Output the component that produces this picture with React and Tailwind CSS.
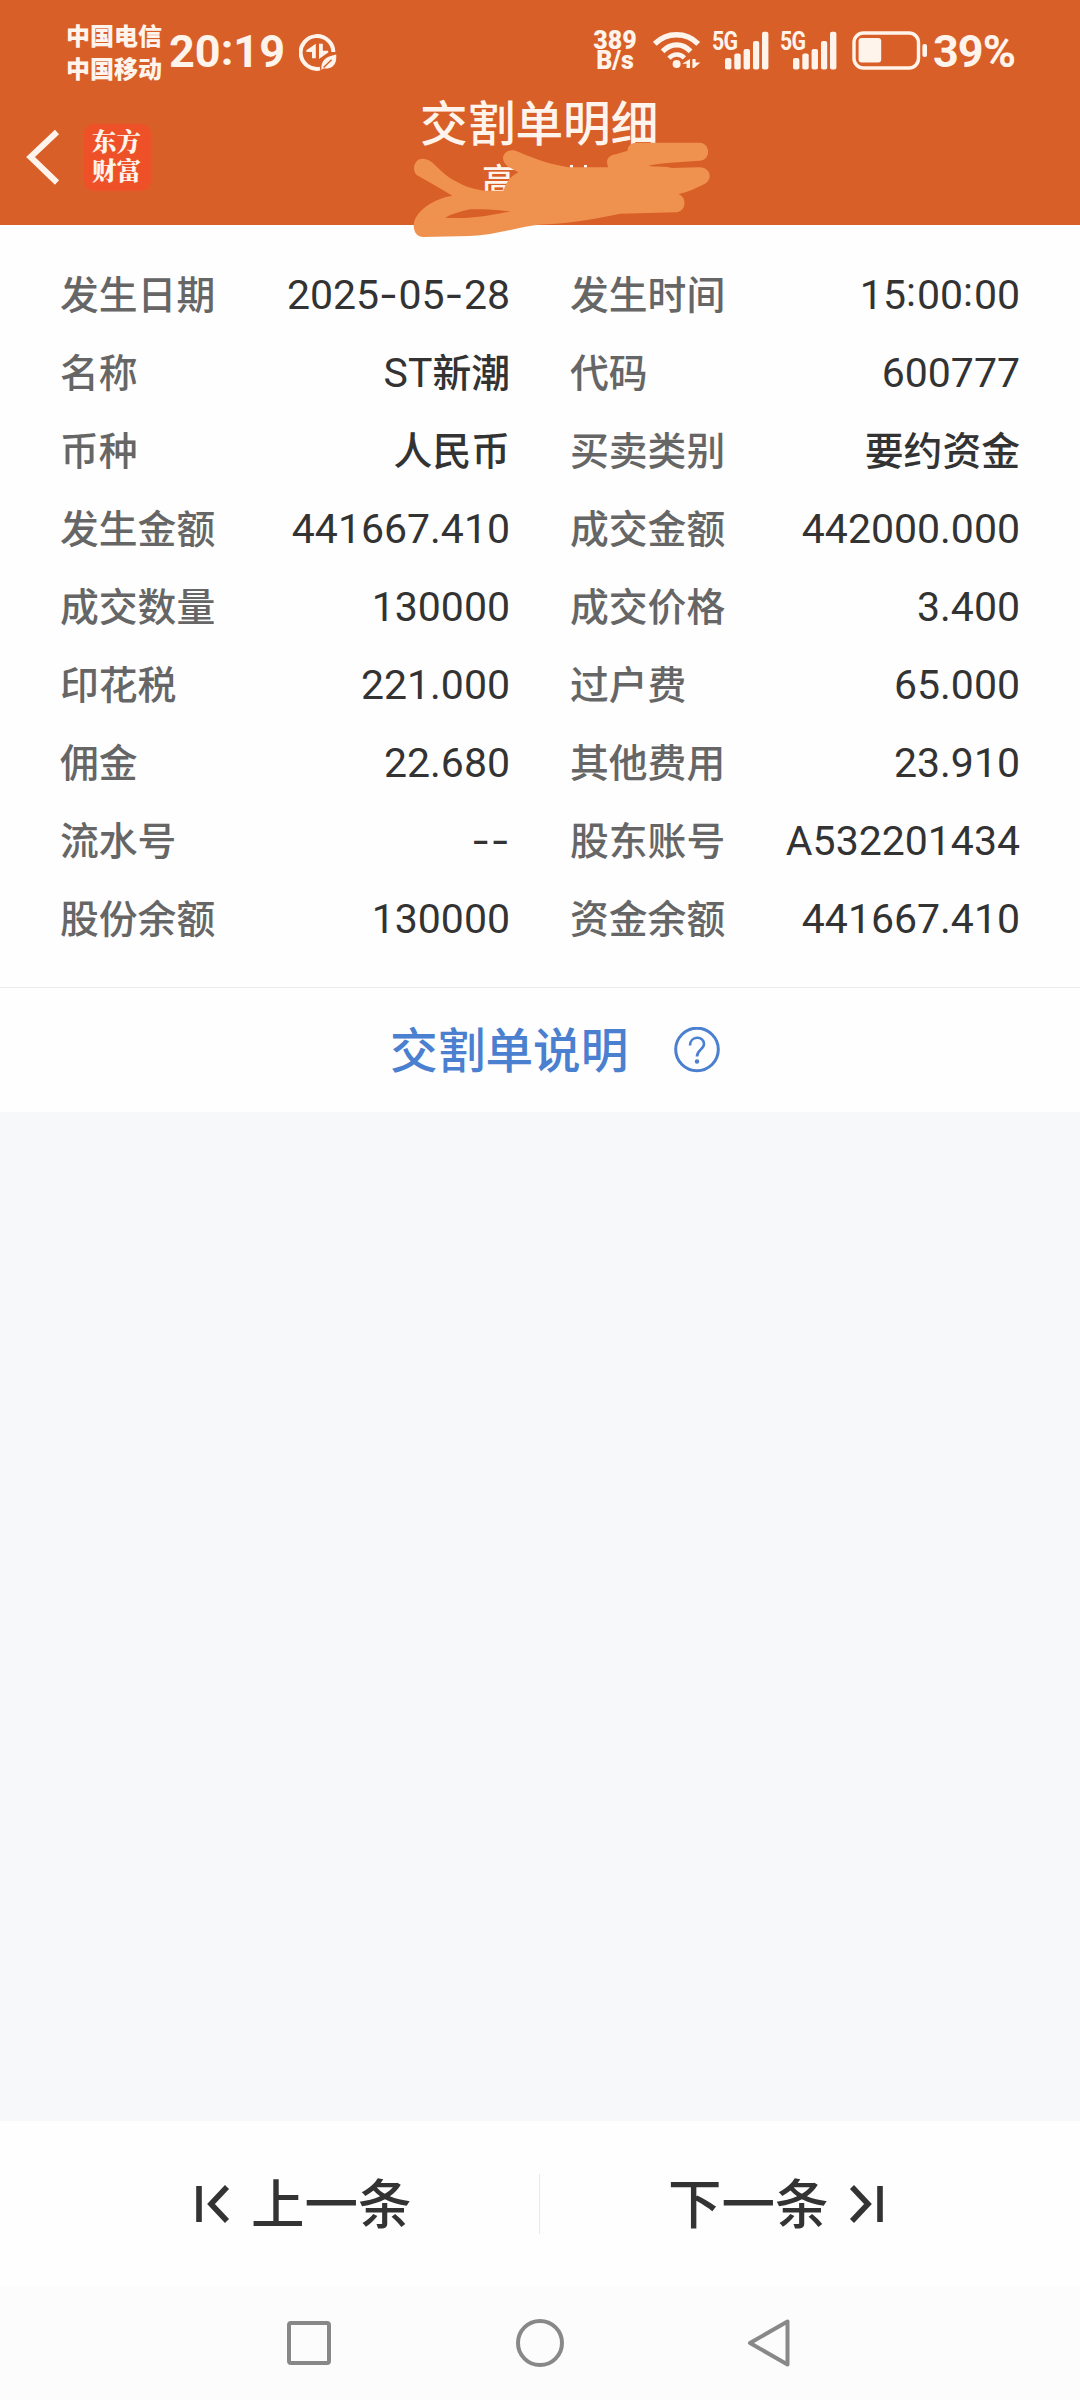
import React from 'react';

const rows = [
  ['发生日期', '2025-05-28', '发生时间', '15:00:00'],
  ['名称', 'ST新潮', '代码', '600777'],
  ['币种', '人民币', '买卖类别', '要约资金'],
  ['发生金额', '441667.410', '成交金额', '442000.000'],
  ['成交数量', '130000', '成交价格', '3.400'],
  ['印花税', '221.000', '过户费', '65.000'],
  ['佣金', '22.680', '其他费用', '23.910'],
  ['流水号', '--', '股东账号', 'A532201434'],
  ['股份余额', '130000', '资金余额', '441667.410'],
];

const EcoIcon = () => (
  <svg className="ml-[15px] mt-[33px] shrink-0" width="38" height="38" viewBox="0 0 38 38" fill="none">
    <path d="M34.4 19A16.4 16.4 0 1 0 21 35.6" stroke="#fff4ec" strokeWidth="4" />
    <path d="M16.8 10.8v14.400h-3.800v-6.200H7.400v-1.800zM20 10.800h3.800v7h5.400v1.600L20 26z" fill="#fff4ec" />
    <path d="M37.2 21.4c.8 8.8-2.4 14.6-12.6 14.2l-2.2 1.2c-.6-9.4 4-13.2 14.8-15.4z" fill="#fff4ec" />
    <path d="M24.6 34.4l8-7.6" stroke="#d85f27" strokeWidth="1.4" />
  </svg>
);

const WifiIcon = () => (
  <svg className="ml-[15px] mt-[31px] shrink-0" width="48" height="38" viewBox="0 0 48 38" fill="none">
    <path d="M1.800 12.800C14 .8 33 .8 45.200 12.800" stroke="#fff4ec" strokeWidth="5.400" />
    <path d="M9.6 20.400C18 11.8 29.5 11.8 37.6 20.400" stroke="#fff4ec" strokeWidth="5.200" />
    <path d="M16 27.200C20.4 22.4 27 22.4 31.4 26.800" stroke="#fff4ec" strokeWidth="4.600" />
    <circle cx="23.6" cy="33" r="4" fill="#fff4ec" />
    <path d="M37 28v9h-3.4v-4.2h-4.400zM39.4 28h3.2v3.6h4.800L41 37h-1.600z" fill="#fff4ec" />
  </svg>
);

const Signal = () => (
  <div className="relative ml-[11px] mt-[31px] w-[57px] h-[39px] shrink-0">
    <span className="absolute left-0 top-0 text-[26px] leading-[21px] font-bold tracking-[-1px] origin-left scale-x-[0.82]">5G</span>
    <svg className="absolute left-0 top-0" width="57" height="39" fill="#fff4ec">
      <rect x="13" y="27" width="6.4" height="11.5" rx="2" />
      <rect x="22.3" y="22.4" width="6.4" height="16.1" rx="2" />
      <rect x="31.6" y="18" width="6.4" height="20.5" rx="2" />
      <rect x="41" y="10" width="6.2" height="28.5" rx="2" />
      <rect x="50" y="0.8" width="6.4" height="37.7" rx="2" />
    </svg>
  </div>
);

const Battery = () => (
  <svg className="ml-[15px] mt-[31px] shrink-0" width="76" height="39" fill="#fff4ec">
    <rect x="2" y="2" width="64.5" height="35" rx="9.500" fill="none" stroke="#fff4ec" strokeWidth="3.400" />
    <rect x="6.6" y="7" width="22.6" height="24.6" rx="3" />
    <rect x="70.4" y="13" width="4.6" height="13" rx="2" />
  </svg>
);

// dashes are wider and colons sit higher than Roboto's own
const Value = ({ text }) => (
  <span className="text-[41px] text-[#333333] whitespace-nowrap">
    {text.split(/([-:]|[\u4e00-\u9fff]+)/).filter(Boolean).map((part, i) => {
      if (part === '-') return <span key={i} className="font-['Inter'] leading-none tracking-[0.5px]">-</span>;
      if (part === ':') return <span key={i} className="inline-block -translate-y-[3px] pr-px">:</span>;
      if (/[\u4e00-\u9fff]/.test(part)) return <span key={i} className="text-[38.8px] font-medium">{part}</span>;
      return <span key={i}>{part}</span>;
    })}
  </span>
);

const Field = ({ label, value }) => (
  <div className="flex justify-between items-baseline h-[78px] leading-[78px]">
    <span className="text-[38.8px] font-medium text-[#666666]">{label}</span>
    <Value text={value} />
  </div>
);

const Scribble = () => (
  <svg className="absolute left-[413px] top-[142px]" width="297" height="96" viewBox="159 186 891 288">
    <path
      fill="#f0924f"
      fillRule="evenodd"
      d="M188 236C222 238 226 266 280 300C320 323 345 328 375 332L430 332C440 305 450 290 475 277L442 258C415 235 435 207 462 211C510 229 550 250 625 262L745 262C735 240 745 225 770 222L803 212C803 198 812 188 832 188L1018 188C1053 188 1053 242 1018 242C960 246 900 248 865 257C890 262 920 257 935 264L1018 262C1053 262 1058 298 1035 311C1010 324 985 335 955 343C982 350 980 397 945 397L780 401C690 420 620 431 535 434C480 440 400 466 330 468L190 471C160 470 155 435 168 412C185 383 225 355 277 347C240 325 205 305 170 285C155 270 162 236 188 236ZM255 413C330 419 400 404 452 394C420 391 390 386 330 388C300 395 275 402 255 413Z"
    />
  </svg>
);

const App = () => {
  return (
    <div className="w-[1080px] h-[2400px] flex flex-col bg-[#fefefe] font-['Roboto','Noto_Sans_CJK_SC',sans-serif]">
      <header className="relative h-[225px] bg-[#d85f27] text-[#fff4ec] shrink-0">
        {/* status bar */}
        <div className="flex h-[90px] pl-[66px]">
          <div className="mt-[21px] w-[97px] text-[24px] leading-[33px] font-black shrink-0">
            <div>中国电信</div>
            <div>中国移动</div>
          </div>
          <div className="ml-[6px] mt-[29px] w-[115px] text-[45px] leading-[45px] font-bold flex justify-between shrink-0">
            <span>20</span>
            <span className="-translate-y-[2px]">:</span>
            <span>19</span>
          </div>
          <EcoIcon />
          <div className="ml-auto mt-[31px] w-[46px] text-center text-[25px] leading-[20px] font-black shrink-0">
            <div>389</div>
            <div>B/s</div>
          </div>
          <WifiIcon />
          <Signal />
          <Signal />
          <Battery />
          <div className="ml-[5px] mt-[29px] w-[147px] text-[45px] leading-[45px] font-bold tracking-[-1px] shrink-0">39%</div>
        </div>

        {/* title bar */}
        <div className="flex items-start h-[135px] pl-[26px]">
          <svg className="mt-[38px] shrink-0" width="36" height="60" fill="none">
            <path d="M31 4L4.5 29L31 54.500" stroke="#fff4ec" strokeWidth="6" />
          </svg>
          <div className="ml-[22px] mt-[34px] w-[67px] h-[67px] rounded-[10px] bg-[#ee5127] text-[24.500px] leading-[29px] font-black text-center pt-[2px] pr-[2px] shrink-0 font-['Noto_Serif_CJK_SC','Noto_Sans_CJK_SC',sans-serif]">
            <div>东方</div>
            <div>财富</div>
          </div>
          <div className="ml-[269px] w-[240px]">
            <h1 className="mt-[7px] text-[47.700px] leading-[56px] font-medium whitespace-nowrap">交割单明细</h1>
            <div className="mt-[8px] pl-[62px] flex text-[34px] leading-[40px] font-medium">
              <span>高</span>
              <svg width="80" height="40" fill="#fff4ec">
                <path d="M10 27l4 -2v5h-5zM54 4h3v6h-3zM68 4h3v6h-3z" />
              </svg>
            </div>
          </div>
        </div>
        <Scribble />
      </header>

      <main className="h-[763px] border-b border-[#eaeaea] px-[60px] pt-[31px] shrink-0">
        {rows.map(([l1, v1, l2, v2]) => (
          <div key={l1} className="grid grid-cols-2 gap-[60px]">
            <Field label={l1} value={v1} />
            <Field label={l2} value={v2} />
          </div>
        ))}
      </main>

      <div className="flex items-center h-[124px] pl-[390px] shrink-0">
        <span className="pt-[4px] text-[47.700px] leading-[60px] font-medium text-[#4b7fcf]">交割单说明</span>
        <svg className="ml-[46px]" width="46" height="46" fill="none" stroke="#4b7fcf">
          <circle cx="23" cy="22.500" r="21.300" strokeWidth="3" />
          <path d="M16 18.500C16 8.500 30 8.500 30 17C30 22 23 23 23 29.500" strokeWidth="2.600" />
          <circle cx="23" cy="34.500" r="2.200" fill="#4b7fcf" stroke="none" />
        </svg>
      </div>

      <div className="flex-1 bg-[#f6f8fa]" />

      <div className="grid grid-cols-[539px_1px_540px] items-center h-[165px] shrink-0 text-[53.500px] leading-[60px] font-medium text-[#333333]">
        <button className="flex items-center pl-[195px]">
          <svg width="36" height="38" fill="none" stroke="#333333" strokeWidth="5.600">
            <path d="M4 1V37M32 2L16 19L32 36" />
          </svg>
          <span className="ml-[20px] pt-[4px]">上一条</span>
        </button>
        <div className="w-px h-[60px] bg-[#e8e8e8]" />
        <button className="flex items-center pl-[128px]">
          <span className="pt-[4px]">下一条</span>
          <svg className="ml-[19px]" width="36" height="38" fill="none" stroke="#333333" strokeWidth="5.600">
            <path d="M32 1V37M4 2L20 19L4 36" />
          </svg>
        </button>
      </div>

      {/* system navigation */}
      <nav className="flex items-center justify-between h-[114px] pl-[285px] pr-[288px] bg-[#fcfcfc] shrink-0">
        <svg width="48" height="50" fill="none" stroke="#888888" strokeWidth="4">
          <rect x="4" y="5" width="40" height="40" rx="2" />
        </svg>
        <svg width="50" height="50" fill="none" stroke="#888888" strokeWidth="4">
          <circle cx="25" cy="25" r="22" />
        </svg>
        <svg width="46" height="50" fill="none" stroke="#888888" strokeWidth="4" strokeLinejoin="round">
          <path d="M41.500 3.500V46.500L4 25Z" />
        </svg>
      </nav>
    </div>
  );
};

export default App;
